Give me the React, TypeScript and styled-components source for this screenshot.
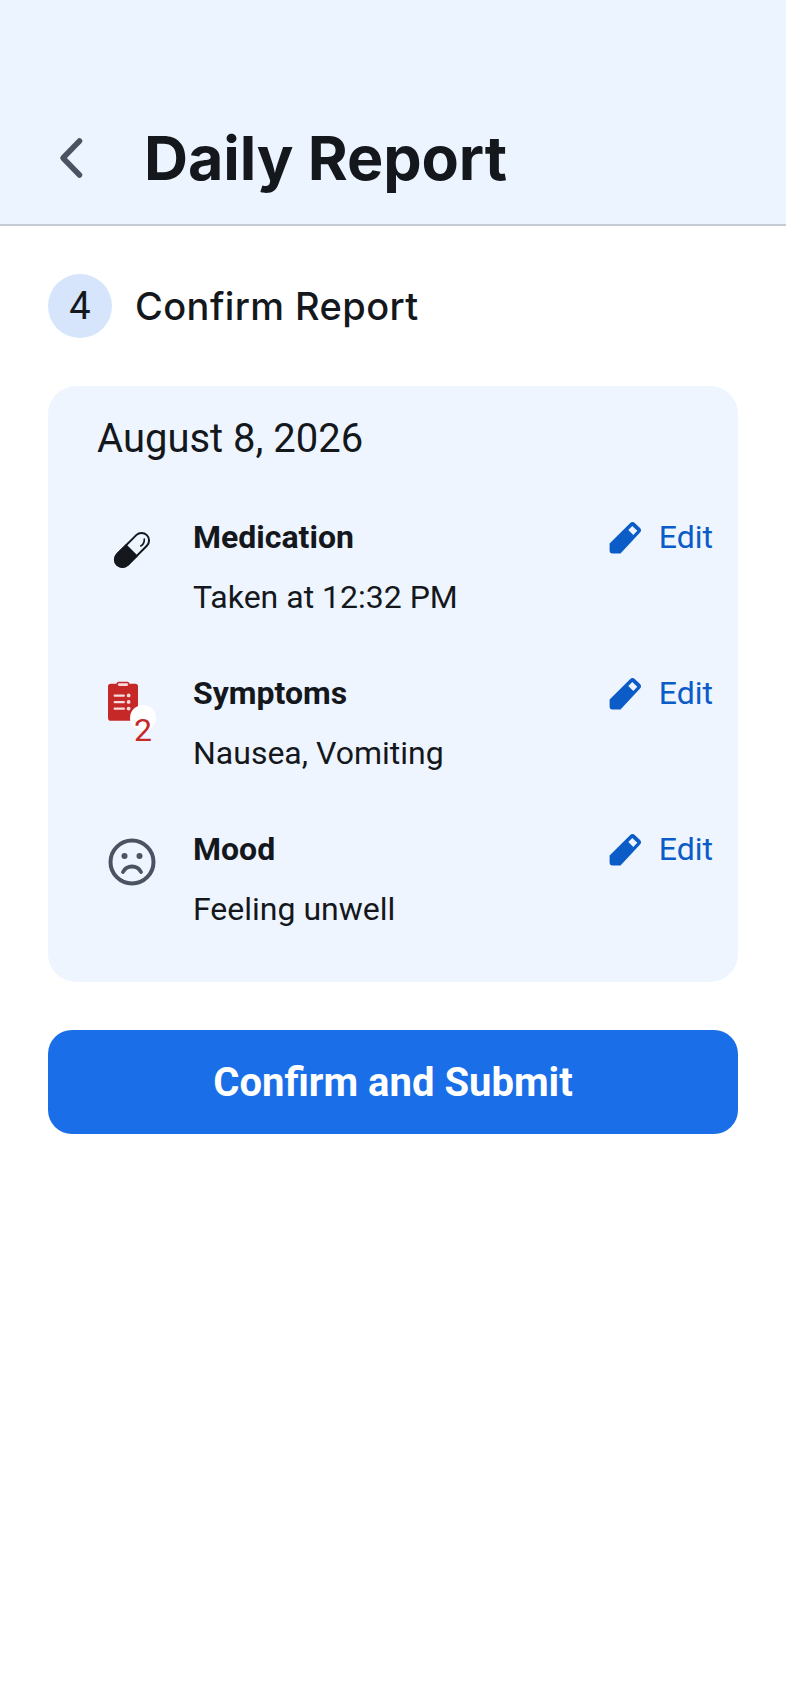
import React from "react";
import styled, { createGlobalStyle } from "styled-components";

const GlobalStyle = createGlobalStyle`
  html, body { margin: 0; padding: 0; background: #fff; }
  body { font-family: Roboto, "Liberation Sans", sans-serif; color: #14181d; }
`;

const Page = styled.div`
  width: 786px;
  min-height: 1704px;
  background: #fff;
`;

const Header = styled.header`
  height: 226px;
  box-sizing: border-box;
  background: #ecf4ff;
  border-bottom: 2px solid #c6cad2;
  padding: 0 0 34px 48px;
  display: flex;
  align-items: flex-end;
`;

const BackButton = styled.button`
  width: 48px;
  height: 64px;
  padding: 0;
  border: none;
  background: none;
  display: flex;
  align-items: center;
  justify-content: center;
  margin-right: 48px;
`;

const Title = styled.h1`
  margin: 0;
  font-family: Inter, sans-serif;
  font-size: 61px;
  font-weight: 700;
  line-height: 64px;
  letter-spacing: -0.1px;
  color: #14181d;
`;

const Content = styled.main`
  padding: 48px;
  display: flex;
  flex-direction: column;
`;

const StepRow = styled.div`
  display: flex;
  align-items: center;
  gap: 23px;
  margin-bottom: 48px;
`;

const StepBadge = styled.div`
  width: 64px;
  height: 64px;
  border-radius: 50%;
  background: #d6e5fc;
  display: flex;
  align-items: center;
  justify-content: center;
  font-size: 38px;
  color: #14181d;
`;

const StepTitle = styled.h2`
  margin: 0;
  font-family: Inter, sans-serif;
  font-size: 38px;
  font-weight: 500;
  letter-spacing: 0.4px;
  color: #14181d;
`;

const Card = styled.section`
  height: 596px;
  box-sizing: border-box;
  background: #eef5ff;
  border-radius: 28px;
  padding: 29px 25px 0 49px;
`;

const DateText = styled.div`
  font-size: 40px;
  line-height: 48px;
  color: #14181d;
  margin-bottom: 56px;
`;

const Row = styled.div`
  height: 156px;
  display: flex;
  align-items: flex-start;
`;

const IconSlot = styled.div`
  width: 96px;
  height: 96px;
  flex: none;
  position: relative;
`;

const RowBody = styled.div`
  flex: 1;
  display: flex;
  flex-direction: column;
  gap: 24px;
`;

const RowTitle = styled.div`
  font-size: 32px;
  line-height: 36px;
  font-weight: 700;
  color: #14181d;
`;

const RowValue = styled.div`
  font-size: 32px;
  line-height: 36px;
  color: #14181d;
`;

const EditLink = styled.a`
  display: flex;
  align-items: center;
  gap: 16px;
  font-size: 32px;
  line-height: 36px;
  color: #0b5cc7;
`;

const Placed = styled.div<{ $left: number; $top: number }>`
  position: absolute;
  left: ${(p) => p.$left}px;
  top: ${(p) => p.$top}px;
  line-height: 0;
`;

const CountBadge = styled.span`
  position: absolute;
  left: 33px;
  top: 30px;
  width: 26px;
  height: 26px;
  border-radius: 50%;
  background: #fff;
  color: #c62828;
  font-size: 32px;
  line-height: 36px;
  padding-top: 7px;
  box-sizing: border-box;
  display: flex;
  justify-content: center;
`;

const SubmitButton = styled.button`
  margin-top: 48px;
  height: 104px;
  border: none;
  border-radius: 24px;
  background: #1a6fe8;
  color: #fff;
  font-family: Roboto, sans-serif;
  font-size: 40px;
  font-weight: 700;
`;

const PencilIcon = () => (
  <svg width="34" height="34" viewBox="0 0 34 34">
    <path
      fill="#0b5cc7"
      d="M.6 23.500 21 3.200a3.600 3.600 0 0 1 5 0l4.800 4.500a3.600 3.600 0 0 1 0 5.100L11.500 33.500H3a2.400 2.400 0 0 1-2.400-2.400Z"
    />
    <path fill="#eef5ff" d="m23.300 6 5 4.700-4 4.300-5-5Z" />
  </svg>
);

const PillIcon = () => (
  <svg width="48" height="48" viewBox="0 0 48 48">
    <g transform="rotate(-45 24 24)">
      <rect x="3" y="16.500" width="42" height="15" rx="7.500" fill="none" stroke="#14181d" strokeWidth="2" />
      <path d="M24 15.500H10.500a8.500 8.500 0 0 0 0 17H24Z" fill="#14181d" />
    </g>
    <path d="M36.300 13Q36.500 18 32.700 20" fill="none" stroke="#14181d" strokeWidth="1.600" strokeLinecap="round" />
  </svg>
);

const ClipboardIcon = () => (
  <svg width="30" height="40" viewBox="0 0 32 42">
    <path
      fill="#c62828"
      d="M3 2.500h6a2.500 2.500 0 0 1 2.500-2h9A2.500 2.500 0 0 1 23 2.500h6a3 3 0 0 1 3 3V39a3 3 0 0 1-3 3H3a3 3 0 0 1-3-3V5.500a3 3 0 0 1 3-3Z"
    />
    <rect x="10.500" y="2" width="11" height="3" rx="1.500" fill="#f6dcdc" />
    <g fill="#f6dcdc">
      <rect x="6" y="14" width="12" height="2.400" rx="1" />
      <rect x="6" y="21" width="12" height="2.400" rx="1" />
      <rect x="6" y="28" width="12" height="2.400" rx="1" />
      <circle cx="22" cy="15" r="2" />
      <circle cx="22" cy="22" r="2" />
      <circle cx="22" cy="29" r="2" />
    </g>
  </svg>
);

const SadFaceIcon = () => (
  <svg width="48" height="48" viewBox="0 0 48 48">
    <circle cx="24" cy="24" r="21.500" fill="none" stroke="#4b5362" strokeWidth="4" />
    <circle cx="16.500" cy="18" r="3" fill="#4b5362" />
    <circle cx="31.500" cy="18" r="3" fill="#4b5362" />
    <path d="M15 34c1.800-3.600 5-5.500 9-5.500s7.200 1.900 9 5.500" fill="none" stroke="#4b5362" strokeWidth="3.800" strokeLinecap="round" />
  </svg>
);

export default function App() {
  return (
    <Page>
      <GlobalStyle />
      <Header>
        <BackButton aria-label="Back">
          <svg width="28" height="42" viewBox="0 0 28 42">
            <path
              d="M21.500 4 5 21l16.500 17"
              fill="none"
              stroke="#4b5362"
              strokeWidth="5.500"
              strokeLinecap="round"
              strokeLinejoin="round"
            />
          </svg>
        </BackButton>
        <Title>Daily Report</Title>
      </Header>
      <Content>
        <StepRow>
          <StepBadge>4</StepBadge>
          <StepTitle>Confirm Report</StepTitle>
        </StepRow>
        <Card>
          <DateText>August 8, 2026</DateText>
          <Row>
            <IconSlot>
              <Placed $left={11} $top={7}>
                <PillIcon />
              </Placed>
            </IconSlot>
            <RowBody>
              <RowTitle>Medication</RowTitle>
              <RowValue>Taken at 12:32 PM</RowValue>
            </RowBody>
            <EditLink>
              <PencilIcon />
              Edit
            </EditLink>
          </Row>
          <Row>
            <IconSlot>
              <Placed $left={11} $top={6}>
                <ClipboardIcon />
              </Placed>
              <CountBadge>2</CountBadge>
            </IconSlot>
            <RowBody>
              <RowTitle>Symptoms</RowTitle>
              <RowValue>Nausea, Vomiting</RowValue>
            </RowBody>
            <EditLink>
              <PencilIcon />
              Edit
            </EditLink>
          </Row>
          <Row>
            <IconSlot>
              <Placed $left={11} $top={7}>
                <SadFaceIcon />
              </Placed>
            </IconSlot>
            <RowBody>
              <RowTitle>Mood</RowTitle>
              <RowValue>Feeling unwell</RowValue>
            </RowBody>
            <EditLink>
              <PencilIcon />
              Edit
            </EditLink>
          </Row>
        </Card>
        <SubmitButton>Confirm and Submit</SubmitButton>
      </Content>
    </Page>
  );
}
